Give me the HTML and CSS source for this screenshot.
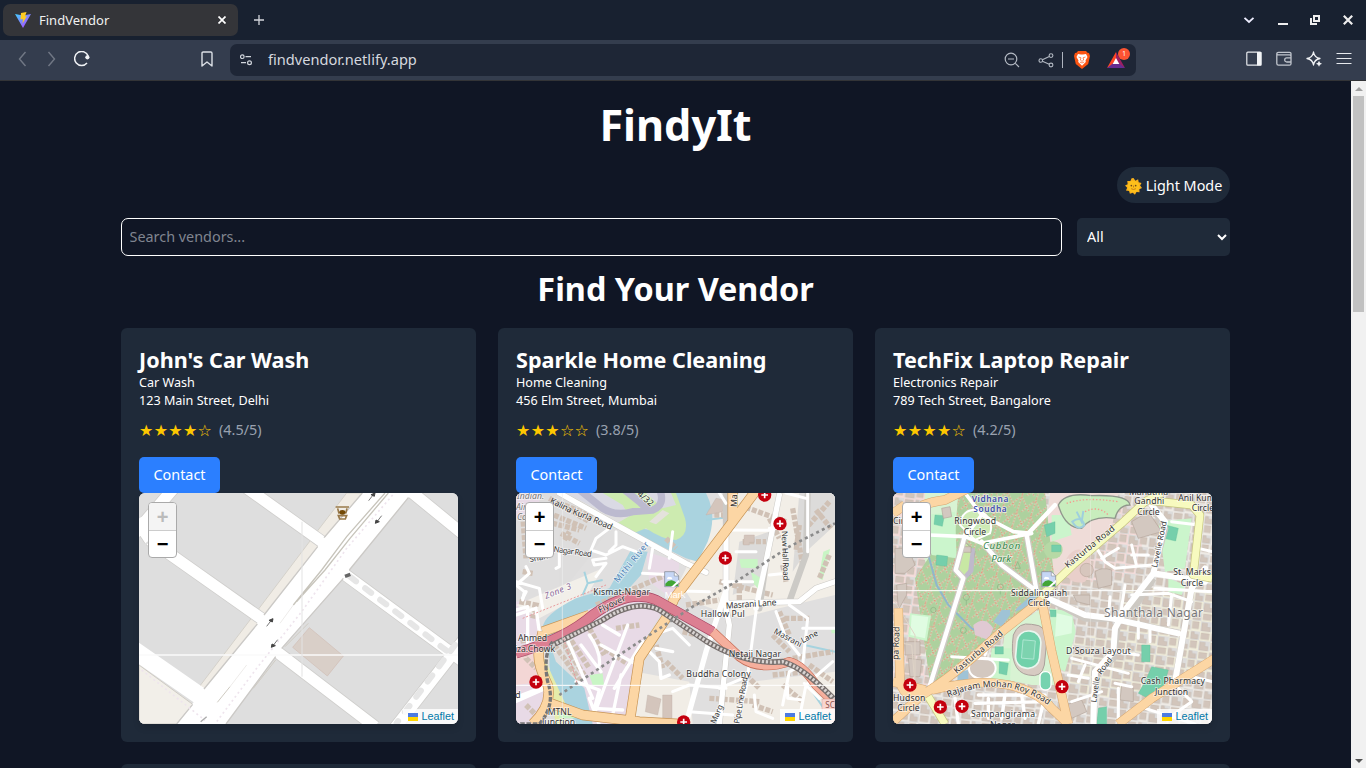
FILE: index.html
```html
<!DOCTYPE html>
<html lang="en">
<head>
<meta charset="utf-8">
<title>FindVendor</title>
<link rel="stylesheet" href="styles.css">
</head>
<body>
<svg width="0" height="0" class="defs" aria-hidden="true">
  <defs>
    <g id="hospital"><circle r="20" fill="#c4000e"/><path d="M-10 0H10M0-10V10" stroke="#fff" stroke-width="5"/></g>
    <g id="broken"><path d="M1 1H30L43 14V46H1Z" fill="#c6d6f5" stroke="#8d929c" stroke-width="2.5"/><path d="M30 1V14H43Z" fill="#fff" stroke="#8d929c" stroke-width="2"/><path d="M8 22q2-8 8-5q8-1 8 7H8z" fill="#fff"/><path d="M3 44V37Q12 26 22 27T41 40V44Z" fill="#42a536"/><path d="M20 47L44 25V33L29 47Z" fill="#fff"/></g>
    <g id="arrow"><path d="M0 0L-17 22" stroke="#777" stroke-width="3"/><path d="M2-1L0 9L-10 4Z" fill="#444" stroke="#444" stroke-width="3"/></g>
    <linearGradient id="vite" x1="0" y1="0" x2="1" y2="1"><stop stop-color="#41d1ff"/><stop offset="1" stop-color="#bd34fe"/></linearGradient>
    <pattern id="blocks" width="62" height="58" patternUnits="userSpaceOnUse" patternTransform="rotate(7)"><path d="M0 0H34V30H0ZM34 32H62V58H34Z" fill="#dddcdb"/><path d="M3 4h16v12h10v12H3zM37 3h19v21H37zM4 35h24v18H4zM36 34h9v7h12v14H36z" fill="#d2c5bb" stroke="#bfafa3"/></pattern>
    <pattern id="dots" width="44" height="50" patternUnits="userSpaceOnUse" patternTransform="rotate(18)"><path d="M5 0V50M5 6L40 44M44 10L18 50" stroke="#cfe0bf" stroke-width="5" fill="none"/><path d="M5 0V50M5 6L40 44M44 10L18 50" stroke="#fa8072" stroke-width="3.5" stroke-dasharray="4 5" fill="none"/></pattern>
    <path id="rajaram" d="M190 637Q285 596 370 608Q440 622 500 668"/>
    <path id="kalina" d="M130 53L200 88Q260 110 320 138"/>
  </defs>
</svg>

<header class="browser">
  <div class="tabs">
    <div class="tab">
      <svg class="favicon" viewBox="0 0 16 16"><path d="M0 2L8 16L16 2L8 3.5Z" fill="url(#vite)"/><path d="M6 1L11.5 0L10 4.5L12 4L7.5 11.5L8 7L5.5 7.5Z" fill="#ffcb20"/></svg>
      <span class="tab-title">FindVendor</span>
      <svg width="8" height="8" viewBox="0 0 8 8"><path d="M.5.5L7.5 7.5M7.5.5L.5 7.5" stroke="#fff" stroke-width="1.7"/></svg>
    </div>
    <svg class="new-tab" width="10" height="10" viewBox="0 0 10 10"><path d="M5 0V10M0 5H10" stroke="#d3d6dc" stroke-width="1.3"/></svg>
    <div class="window-controls">
      <svg width="12" height="12" viewBox="0 0 12 12"><path d="M1.5 3.8L6 8L10.5 3.8" fill="none" stroke="#eef" stroke-width="1.8"/></svg>
      <svg width="12" height="12" viewBox="0 0 12 12"><path d="M1 10H11" stroke="#eee" stroke-width="2"/></svg>
      <svg width="12" height="12" viewBox="0 0 12 12"><path d="M5 2H10V7H5ZM2 4V10H8" fill="none" stroke="#eee" stroke-width="2"/></svg>
      <svg width="12" height="12" viewBox="0 0 12 12"><path d="M1.8 1.8L10.2 10.2M10.2 1.8L1.8 10.2" stroke="#eee" stroke-width="2.2"/></svg>
    </div>
  </div>
  <div class="toolbar">
    <div class="nav-icons">
      <svg viewBox="0 0 16 16"><path d="M11.5 1L5.5 8L11.5 15" fill="none" stroke="#717885" stroke-width="1.4"/></svg>
      <svg viewBox="0 0 16 16"><path d="M4.5 1L10.5 8L4.5 15" fill="none" stroke="#717885" stroke-width="1.4"/></svg>
      <svg viewBox="0 0 16 16"><path d="M13 12A7 7 0 1 1 14.2 5" fill="none" stroke="#f1f3f6" stroke-width="1.5"/><circle cx="13.4" cy="6.3" r="2.1" fill="#f1f3f6"/></svg>
    </div>
    <svg class="bookmark" viewBox="0 0 12 16"><path d="M1 2.2Q1 1 2.2 1H9.8Q11 1 11 2.2V15L6 11L1 15Z" fill="none" stroke="#dce0e6" stroke-width="1.4" stroke-linejoin="round"/></svg>
    <div class="address">
      <svg class="site-info" viewBox="0 0 12 12"><g fill="none" stroke="#d2d6dd" stroke-width="1.2"><circle cx="2.3" cy="2.7" r="1.8"/><path d="M5.5 2.7H11M1 8.7H6"/><circle cx="9.5" cy="8.7" r="1.9"/></g></svg>
      <span class="url">findvendor.netlify.app</span>
      <svg class="i-zoom" viewBox="0 0 16 16"><g fill="none" stroke="#b3b9c3" stroke-width="1.2"><circle cx="7" cy="7" r="5.8"/><path d="M11.3 11.3L15 15M4 7H10"/></g></svg>
      <svg class="i-share" viewBox="0 0 16 16"><g fill="none" stroke="#b3b9c3" stroke-width="1.1"><circle cx="2.8" cy="8.5" r="1.8"/><circle cx="13" cy="3.6" r="1.9"/><circle cx="13" cy="13" r="1.9"/><path d="M4.4 7.7L11.3 4.5M4.4 9.3L11.3 12.2"/></g></svg>
      <i class="rule"></i>
      <svg class="i-brave" viewBox="0 0 16 18"><path d="M4 0H12L13.5 1.8L15 2L16 5L14.2 13L8 18L1.8 13L0 5L1 2L2.5 1.8Z" fill="#fb5412"/><path d="M4 3L7 3.4H9L12 3L13.5 6L11.5 9.5L11.8 11L8 14.7L4.2 11L4.5 9.5L2.5 6Z" fill="#fff"/><path d="M4.5 6L7 6.8L6.3 9L8 10.4L9.7 9L9 6.8L11.5 6M5.8 11L8 12L10.2 11" stroke="#fb5412" stroke-width=".7" fill="none"/></svg>
      <span class="rewards">
        <svg viewBox="0 0 18 16"><path d="M9 0L0 16L9 11Z" fill="#ff4724"/><path d="M9 0L18 16L9 11Z" fill="#9e1f63"/><path d="M0 16H18L9 9Z" fill="#662d91"/><path d="M9 6L12.3 12H5.7Z" fill="#fff"/></svg>
        <b class="badge">1</b>
      </span>
    </div>
    <div class="tool-icons">
      <svg viewBox="0 0 16 16"><rect x=".8" y="1.2" width="14.2" height="13" rx="1" fill="none" stroke="#e6e9ed" stroke-width="1.2"/><path d="M11 1H15.4V14.5H11Z" fill="#f2f4f6"/></svg>
      <svg viewBox="0 0 16 16"><g fill="none" stroke="#c0c5cd" stroke-width="1.3"><path d="M15 5V2.8Q15 1.3 13.5 1.3H2.5Q.8 1.3.8 3V12.5Q.8 14.2 2.5 14.2H13.5Q15 14.2 15 12.7V4.5Q14.5 3.8 13.5 3.8H2Q.8 3.8.8 3"/><path d="M15 6.8H10.8A2.1 2.1 0 0 0 10.8 11H15"/></g></svg>
      <svg viewBox="0 0 16 16"><path d="M7.5 1Q8.3 6.5 14 7.5Q8.3 8.5 7.5 14Q6.7 8.5 1 7.5Q6.7 6.5 7.5 1Z" fill="none" stroke="#f1f3f6" stroke-width="1.3" stroke-linejoin="round"/><path d="M13 9.8L14 11.8L16 12.8L14 13.8L13 15.8L12 13.8L10 12.8L12 11.8Z" fill="#f1f3f6"/></svg>
      <svg viewBox="0 0 16 16"><path d="M.5 2.5H15.5M.5 7.5H15.5M.5 12.5H15.5" stroke="#e6e9ed" stroke-width="1"/></svg>
    </div>
  </div>
</header>

<div class="viewport">
  <main class="page">
    <h1>FindyIt</h1>
    <div class="theme-row">
      <button class="theme"><svg viewBox="0 0 18 18"><path d="M9 0L11 2.8L13.9 1.4L14.5 4.5L17.5 5.4L16 8L18 10.5L15.2 11.8L15.4 15L12.2 14.7L10.5 17.8L8.2 15.6L5.2 16.8L4.3 13.8L1 13.2L2.3 10.3L0 8L2.8 6.5L2.4 3.2L5.7 3.3L7 .3Z" fill="#f9b11b"/><circle cx="9" cy="9" r="6.2" fill="#fec01b"/><circle cx="6.7" cy="8" r=".9" fill="#704a1b"/><circle cx="11.3" cy="8" r=".9" fill="#704a1b"/><path d="M9 8V10M6.5 11.3Q9 13 11.5 11.3" fill="none" stroke="#b8701a" stroke-width=".9"/></svg>Light Mode</button>
    </div>
    <div class="filters">
      <input type="text" placeholder="Search vendors...">
      <select><option>All</option></select>
    </div>
    <h2>Find Your Vendor</h2>

    <section class="grid">
      <article class="card">
        <h3>John's Car Wash</h3>
        <p>Car Wash</p>
        <p>123 Main Street, Delhi</p>
        <div class="rating"><span class="stars">★★★★☆</span><span>(4.5/5)</span></div>
        <button class="contact">Contact</button>
        <div class="map">
          <svg class="tiles" viewBox="27 24 957 693">
            <rect x="27" y="24" width="957" height="693" fill="#dedede"/>
            <path d="M27 540L188 658L140 717H27Z" fill="#f2efe9" stroke="#cfcbc4" stroke-width="3"/>
            <path d="M650 24L563 137L540 168L385 373L360 405L208 605L230 620L420 390L590 160L710 24Z" fill="#f0ece5" stroke="#d4d1ca" stroke-width="3"/>
            <path d="M345 5L580 173M60 165L400 405M5 492L230 650M430 492L735 725M640 265L1000 530M1000 466L790 735M825 5L1000 148M15 145L135 5M20 105L60 165" fill="none" stroke="#d0cfcd" stroke-width="39"/>
            <g fill="none" stroke="#fff">
              <path d="M345 5L580 173M60 165L400 405M430 492L735 725M640 265L1000 530M1000 466L790 735M825 5L1000 148M15 145L135 5M20 105L60 165" stroke-width="34"/>
              <path d="M5 490L235 650" stroke-width="53"/>
            </g>
            <path d="M697 24L563 185L402 390L222 612L140 717H288L437 515L455 490L640 280L658 255L835 38L850 24Z" fill="#fff"/>
            <path d="M697 24L582 158M563 185L402 390M382 417L222 612M188 658L140 717M288 717L437 515M455 490L640 280M658 255L835 38" fill="none" stroke="#cbc9c6" stroke-width="4"/>
            <path d="M765 24L650 155L575 255L490 360M775 24L660 160L585 255L500 350" fill="none" stroke="#c7c4bb" stroke-width="4"/>
            <path d="M490 360L450 415M350 540L300 605" fill="none" stroke="#eeecea" stroke-width="3"/>
            <path d="M300 605L262 652M465 485L535 415M437 525L370 610" fill="none" stroke="#cfcbc2" stroke-width="3"/>
            <path d="M788 30L650 190L515 380L380 550L255 717M35 555L225 706" fill="none" stroke="#eee4ed" stroke-width="5" stroke-dasharray="6 9"/>
            <path d="M660 275L960 505M975 480L800 714" fill="none" stroke="#e6e6e6" stroke-width="18" stroke-dasharray="23 34" stroke-linecap="round"/>
            <path d="M538 428L640 513L592 573L488 487Z" fill="#d9cfc8" stroke="#d0bdb3" stroke-width="2"/>
            <path d="M27 510H984" stroke="#fafafa" stroke-width="5"/><path d="M516 110V575" stroke="#e3e3e3" stroke-width="3"/>
            <use href="#arrow" x="733" y="25"/><use href="#arrow" x="427" y="402"/>
            <use href="#arrow" transform="translate(738 114) rotate(180)"/><use href="#arrow" transform="translate(426 486) rotate(180)"/>
            <path d="M212 710L230 695" stroke="#aaa" stroke-width="4"/><path d="M645 274L661 268" stroke="#666" stroke-width="10"/>
            <path d="M617 66H657M623 70L627 86M651 70L647 86M625 92H650L646 102H629Z" fill="none" stroke="#98794a" stroke-width="5"/><ellipse cx="637" cy="82" rx="9" ry="7" fill="#734a08"/>
          </svg>
          <div class="zoom"><span class="off">+</span><span>−</span></div>
          <div class="credit"><i></i>Leaflet</div>
        </div>
      </article>

      <article class="card">
        <h3>Sparkle Home Cleaning</h3>
        <p>Home Cleaning</p>
        <p>456 Elm Street, Mumbai</p>
        <div class="rating"><span class="stars">★★★☆☆</span><span>(3.8/5)</span></div>
        <button class="contact">Contact</button>
        <div class="map">
          <svg class="tiles" viewBox="30 24 957 693">
            <rect x="30" y="24" width="957" height="693" fill="#e0dfdf"/>
            <path d="M30 24H180L310 130L240 230L160 330L30 290Z" fill="#dedddd"/>
            <path d="M610 110L700 24H987V330L820 370L700 400L560 350L520 290Z" fill="#f2eee7"/>
            <path d="M880 24H987V120L900 200L860 260ZM700 170L790 140L770 290L680 330Z" fill="#dcdbda"/>
            <path d="M200 460L250 370L440 340L470 380L400 490L370 717H240Z" fill="#e8dae6"/>
            <path d="M30 25H100V420L120 717H30ZM420 200L520 230L510 350L430 290Z" fill="#e8dae6"/>
            <path d="M30 100H160V330L30 350Z" fill="#dfdede"/>
            <path d="M390 560L550 590L560 717H380ZM660 600L987 560V717H640Z" fill="#f1ede6"/>
            <path d="M30 500L100 510L110 590L30 600Z" fill="#f3d6d5"/>
            <path d="M30 360L290 250L250 320L100 400Z" fill="#f2efe9"/>
            <path d="M490 24H600Q635 90 605 170L575 230L540 220L385 145L400 130L530 150Z" fill="#aad3df"/>
            <path d="M180 24H500L520 75Q490 110 400 100L290 80Z" fill="#dadae4"/>
            <path d="M290 24H420L470 70L510 60L495 24H510L537 100Q550 150 510 165Q470 165 420 130L390 142L315 125L370 94L350 60Z" fill="#cdebb0"/>
            <path d="M430 110L470 75L490 85L450 118Z" fill="#e4e2dc"/>
            <path d="M215 10L290 70Q330 95 380 80L440 75Q480 60 460 10M350 10L400 50L430 78" fill="none" stroke="#bcbacf" stroke-width="22" stroke-linejoin="round"/>
            <path d="M375 195L425 200L405 270L360 320L300 350L210 390L160 440L130 470L150 530L235 610L260 717H210L170 650Q130 610 130 520L110 430Q110 390 210 340L310 310Z" fill="#aad3df"/>
            <path d="M235 260L245 295L230 330M245 295L290 285M600 105L700 92M895 480L987 500M905 600L960 680" fill="none" stroke="#a6d3df" stroke-width="6"/>
            <path d="M110 510L180 660L175 717H150Z" fill="#e5ecaa"/>
            <path d="M250 570L290 565L294 600L260 600ZM700 222H755V250L705 248ZM735 260L765 280L760 315L742 295ZM952 200L972 192L950 285L938 280ZM160 650L210 700H160ZM975 430L987 425V445L977 445Z" fill="#c9f5c5"/>
            <g fill="none" stroke="#d0c1b5" stroke-width="16" stroke-dasharray="15 5">
              <path d="M70 60L240 130M50 90L60 220M80 100L220 135M165 145L220 175M175 165L190 140M40 350L90 360L80 400M50 260L80 265M130 40L250 110M175 60L260 95"/>
              <path d="M185 450L250 550M160 460L235 570M145 480L225 590M250 430L295 510M280 480L370 540M330 430L400 420M270 360L480 270"/>
              <path d="M700 60L840 110M710 170H780M860 70L890 240M970 50L900 130M930 75L975 130M970 210L940 280M880 120L870 200M790 100L820 160M660 90H625"/>
              <path d="M640 290L800 330M700 290V350M540 360L640 345M830 240L840 290M480 160L510 190"/>
              <path d="M820 380L850 450M835 400H910M800 450L850 500M860 520L980 500M910 540L980 590M800 570L900 560M830 600L890 650M720 570L760 610M610 640L760 650M530 440L570 450M480 530L530 580M450 480L470 550M50 460L60 520L90 550M60 660L100 700M740 660L800 680"/>
            </g>
            <path d="M425 630L465 642L455 690L418 680ZM600 90L650 80L660 45L630 40ZM715 150H745V172H730V180H712ZM470 630H498V700H470Z" fill="#d4c5bc" stroke="#bdaea3"/>
            <path d="M160 24L340 125L540 235L600 262M820 30L780 230L760 370M905 30L900 210L850 350M660 24V370L670 420L640 717M987 290L930 310L880 350L650 355" fill="none" stroke="#cccac6" stroke-width="19" stroke-linecap="round" stroke-linejoin="round"/>
            <g fill="none" stroke="#fff" stroke-linecap="round" stroke-linejoin="round">
              <path d="M160 24L340 125L540 235L600 262M820 30L780 230L750 370M660 140V370L670 420L640 717M987 290L930 310L880 350L650 355M662 310L600 500L540 717M30 640L110 610" stroke-width="16"/>
              <path d="M310 130L270 160L255 195L300 210L350 185L390 200M330 140V180L310 200M300 220L260 225L265 240L300 235L270 275M60 245L70 265L30 300L55 320L50 345M160 200V245L150 250M30 290L100 310L110 370M440 190L430 250M410 265L510 270M500 140L490 220M905 24V200M900 40L840 24M820 130H790M660 135L795 136M790 270L840 265M690 200H750M650 290H740M530 318L610 320M640 24L660 55" stroke-width="9"/>
              <path d="M180 455L260 640M225 480L285 560M250 450Q285 500 280 540M290 420L340 450M285 480L395 540M365 420L260 700M410 470L325 610M250 640L280 720M210 590L280 615L265 670L350 675M345 570L320 690M430 500L460 530L465 580L490 570M450 490L500 500M30 390L90 370L100 440M30 375L65 365V480M60 320L50 340" stroke-width="10"/>
              <path d="M850 360L905 400L890 540L850 560L830 660M890 430L987 430M980 530L900 600L880 700M810 380L840 460L880 510M750 380L720 610L690 717M745 630L750 680L800 700M550 680L680 690M30 650L120 610M500 620L550 600L660 610M845 600V640L890 645M895 595L940 640M710 580L640 610M440 450L500 430L550 480" stroke-width="9"/>
            </g>
            <g fill="none" stroke-linejoin="round">
              <path d="M755 10L665 130L505 340L480 400L400 520L370 717M680 24V110L650 150M110 440L100 490Q90 530 125 600Q140 660 80 717M250 390L110 440M120 650L230 690L400 710L520 717" stroke="#c79455" stroke-width="31"/>
              <path d="M755 10L665 130L505 340L480 400L400 520L370 717M680 24V110L650 150M110 440L100 490Q90 530 125 600Q140 660 80 717M250 390L110 440M120 650L230 690L400 710L520 717" stroke="#fcd6a4" stroke-width="27"/>
              <path d="M30 505Q180 460 260 390Q370 310 450 345L620 440" stroke="#a84765" stroke-width="31"/>
              <path d="M30 505Q180 460 260 390Q370 310 450 345L620 440" stroke="#dc7f92" stroke-width="27"/>
              <path d="M620 440L700 515Q760 560 850 530Q890 540 930 600L987 655" stroke="#c36b55" stroke-width="28"/>
              <path d="M620 440L700 515Q760 560 850 530Q890 540 930 600L987 655" stroke="#f5af9d" stroke-width="24"/>
              <path d="M140 480L290 405Q390 340 460 375L600 468Q720 540 830 530Q890 545 987 645" stroke="#77706e" stroke-width="17"/>
              <path d="M140 480L290 405Q390 340 460 375L600 468Q720 540 830 530Q890 545 987 645" stroke="#d8d3d1" stroke-width="10" stroke-dasharray="7 5"/>
              <path d="M140 470Q110 510 125 590Q150 660 100 717L40 717" stroke="#777" stroke-width="10" stroke-dasharray="14 5"/>
              <path d="M160 630L370 490L560 365L690 290L850 185L987 115" stroke="#8b8b8b" stroke-width="8" stroke-dasharray="9 10"/>
              <path d="M170 450L215 600M50 400L300 300" stroke="#e89a9d" stroke-width="3" stroke-dasharray="6 5"/>
            </g>
            <path d="M30 601H987" stroke="#fff" stroke-width="3"/><path d="M169 24V717" stroke="#eee" stroke-width="2"/>
            <use href="#hospital" x="776" y="30"/><use href="#hospital" x="822" y="116"/><use href="#hospital" x="658" y="219"/><use href="#hospital" x="90" y="591"/><use href="#hospital" x="533" y="711"/>
            <g class="label">
              <g class="grey"><text x="33" y="43">Indian.</text><text x="30" y="75">Air</text><text x="33" y="105">Co</text></g>
              <text textLength="202"><textPath href="#kalina">Kalina Kurla Road</textPath></text>
              <text transform="translate(72 232) rotate(-12)" class="small">Shan</text><text transform="translate(142 200) rotate(8)" class="small" textLength="115">Nagar Road</text>
              <text transform="translate(120 342) rotate(-22)" class="zone" textLength="84">Zone 3</text>
              <text transform="translate(336 295) rotate(-51)" class="water" textLength="150">Mithi River</text>
              <text transform="translate(392 30) rotate(40)">4/32</text>
              <text x="262" y="329" textLength="170">Kismat-Nagar</text>
              <text transform="translate(282 384) rotate(-26)">Flyover</text>
              <text transform="translate(692 66) rotate(-88)">Ma</text>
              <text transform="translate(827 138) rotate(88)" class="small" textLength="148">New Hall Road</text>
              <text transform="translate(660 371) rotate(-4)" textLength="152">Masrani Lane</text>
              <text transform="translate(802 444) rotate(28)" class="small">Masrani</text><text transform="translate(890 475) rotate(-28)" class="small">Lane</text>
              <text x="584" y="396" textLength="132">Hallow Pul</text><text x="668" y="515" textLength="157">Netaji Nagar</text><text x="541" y="575" textLength="193">Buddha Colony</text>
              <text x="36" y="468">Ahmed</text><text x="26" y="500">iza.Chowk</text>
              <text x="125" y="690">MTNL</text><text x="108" y="721">Junction</text><text x="28" y="640">d</text>
              <text transform="translate(700 717) rotate(-80)" class="small" textLength="142">Pipe Line Road</text><text transform="translate(628 718) rotate(-67)" class="small">Marg</text>
            </g>
            <path d="M948 642H987V710H948Z" fill="#f8d5cf" stroke="#c58a80"/><text x="958" y="670" class="shield">SC</text>
            <use href="#broken" x="475" y="259"/><text x="476" y="338" class="alt">Mark</text>
          </svg>
          <div class="zoom"><span>+</span><span>−</span></div>
          <div class="credit"><i></i>Leaflet</div>
        </div>
      </article>

      <article class="card">
        <h3>TechFix Laptop Repair</h3>
        <p>Electronics Repair</p>
        <p>789 Tech Street, Bangalore</p>
        <div class="rating"><span class="stars">★★★★☆</span><span>(4.2/5)</span></div>
        <button class="contact">Contact</button>
        <div class="map">
          <svg class="tiles" viewBox="24 24 957 693">
            <rect x="24" y="24" width="957" height="693" fill="#eeeae5"/>
            <path d="M500 60L700 24L780 100L760 270L500 310ZM24 24H150L130 200L100 470L130 600L24 610Z" fill="#f5dcda"/>
            <path d="M720 310H981V560L760 650L560 620L540 480L700 430Z" fill="#f0eddb"/>
            <path d="M24 24H981V717H24Z" fill="url(#blocks)"/>
            <path d="M120 24H230L200 200L140 280L110 200ZM360 440L470 370L510 600L440 600L340 580Z" fill="#d8f3d3"/>
            <path d="M495 24H640L700 24L680 130L560 240L510 290L480 180Z" fill="#efdcd8"/>
            <path d="M220 24H480L510 300L400 400L330 440L190 590H135L90 280L150 190L210 150Z" fill="#add19e"/>
            <path d="M220 24H480L510 300L400 400L330 440L190 590H135L90 280L150 190L210 150Z" fill="url(#dots)" opacity=".8"/>
            <path d="M120 90L210 80L215 220L140 210ZM75 385L138 392L125 468L70 455ZM495 370L560 380L572 440L540 560L500 540ZM500 90H550L560 150L500 170ZM820 110L920 100L900 250L840 260ZM850 280L900 300L890 330L850 320ZM320 490H380L375 590L310 600Z" fill="#cbf5cc"/>
            <path d="M80 390L130 396L120 460L76 450ZM515 385L562 395L560 445L510 455Z" fill="#e0fce2"/>
            <path d="M520 60Q540 20 620 32Q730 28 735 60Q700 60 690 100Q620 90 590 130Q540 130 520 60Z" fill="#c8edbd" stroke="#8f978c" stroke-width="4"/>
            <path d="M545 55Q600 35 700 50M600 80Q640 60 670 90" fill="none" stroke="#f59a90" stroke-width="4" stroke-dasharray="4 6"/>
            <path d="M562 110Q590 90 598 120Q580 140 562 110ZM575 80L590 110L595 78" fill="none" stroke="#9fcfdd" stroke-width="6"/>
            <ellipse cx="505" cy="195" rx="28" ry="26" fill="#b6d9a5"/>
            <path d="M225 120Q230 70 280 75Q330 100 315 145L270 165Z" fill="#cdeab5" stroke="#fff" stroke-width="6"/>
            <path d="M240 170L270 200L255 270L225 285L215 250Z" fill="#c8e8a4" stroke="#a99e9c" stroke-width="3"/><path d="M270 190L265 260L235 290L230 278L250 255L258 190Z" fill="#bfb9cb"/>
            <path d="M130 210L155 300L190 360L260 430L300 450" fill="none" stroke="#8fb7cc" stroke-width="6"/>
            <path d="M325 410L350 375L375 375V390L350 425ZM395 370L440 330L455 335L430 365L390 380ZM220 560L250 555V600H215Z" fill="#9fc3d6"/>
            <path d="M265 420Q300 390 325 430L310 465L270 450Z" fill="#e0c9d3"/>
            <g fill="#75cfab" stroke="#5fbb98"><path d="M150 90L178 92L172 124L147 118ZM155 210L188 214L185 244L153 240ZM478 120L510 110V145L485 155ZM330 485H355V507H330ZM343 530L370 535L365 570L342 565ZM495 375H513V395H497ZM842 120L880 130L872 168L836 160ZM770 480H795V530H770ZM800 545L850 555L835 610L790 640L760 625L780 590ZM640 670L665 665V717H635ZM500 180H528V200H500ZM30 395H47V415H30Z"/></g>
            <path d="M545 220Q570 180 600 200Q640 240 600 290Q560 300 545 270Z" fill="#e9cfca"/>
            <circle cx="605" cy="255" r="20" fill="#d7c6bd" stroke="#b9a79d" stroke-width="2"/>
            <g fill="#d3c8c0" stroke="#b5a69c" stroke-width="2"><path d="M565 330H615V360L575 350ZM630 260Q650 245 680 255V300L640 310ZM170 70L195 65L200 95L175 100ZM30 190H70L90 240L60 265H30ZM35 300L65 295V330L40 375ZM60 470H105V510H60ZM70 520L110 525L105 575H75ZM230 185H258V202H230ZM540 660L590 645L605 680L560 700ZM710 600L745 610V650L705 645ZM740 110L790 80L830 140L760 160Z"/></g>
            <ellipse cx="292" cy="550" rx="40" ry="32" fill="#d3c8c0" stroke="#fff" stroke-width="6"/>
            <path d="M385 450Q400 410 440 418Q490 420 485 470L478 540Q470 580 430 570Q370 560 385 450Z" fill="#d7cbc2" stroke="#aaa19b" stroke-width="3"/>
            <rect x="394" y="438" width="72" height="112" rx="34" fill="#71d1aa" stroke="#e9f7ef" stroke-width="5" transform="rotate(5 430 490)"/><rect x="412" y="466" width="37" height="55" fill="#7dd3af" stroke="#c4efe0" stroke-width="2" transform="rotate(5 430 490)"/>
            <rect x="465" y="560" width="33" height="55" rx="15" fill="#75d3af" stroke="#fff" stroke-width="4"/>
            <path d="M140 590L235 280L212 255L240 150M300 180L350 240L450 315L495 345L600 400L680 400L880 445M425 150L455 320M800 60L840 130L805 260M960 280L920 310L870 590M805 280L740 380L700 400L685 520L630 560L625 717" fill="none" stroke="#cdc9c3" stroke-width="20" stroke-linejoin="round"/>
            <g fill="none" stroke="#fff" stroke-linecap="round" stroke-linejoin="round">
              <path d="M500 345L600 390L680 400L880 445M800 60L840 110L820 200L805 265L720 375L690 430L685 500L630 560L625 717M805 265L960 290M960 250L920 310L870 590" stroke-width="18"/>
              <path d="M135 600L235 280L212 255L240 150M290 170L350 240L450 315L500 345M425 150L455 320M425 150L510 60" stroke-width="13"/>
              <path d="M135 150L240 155L290 175L440 145L385 140L290 90L240 155M290 90L240 24" stroke-width="11"/>
              <path d="M635 190L660 230L690 250L800 240M650 220L700 190M740 180L755 245M740 210H790M720 300L705 400M675 335L670 400M810 310L980 320M740 330L850 325L920 350M860 330L850 420M760 410V460M795 430V470M690 500L760 510M560 520L730 565M600 540L580 590M550 570L610 580M690 595L740 605M700 610V700M650 620L560 650M870 600L920 650L850 700M780 670L930 717M860 110L940 120M940 190L981 200M900 570L981 590M200 515L370 525M300 510L310 480" stroke-width="9"/>
              <path d="M280 630H480L460 717M310 640V700M360 630L350 700M410 630L420 700M270 655L490 650M260 690H450M210 640L220 717" stroke-width="10"/>
            </g>
            <path d="M24 717L90 600L80 480L24 470M90 600V450L24 340" fill="none" stroke="#dfd4c7" stroke-width="3"/>
            <g fill="none" stroke-linejoin="round">
              <path d="M110 62Q140 50 180 45L250 10M40 370L45 590Q60 650 120 625Q190 580 260 520L350 440L470 345L500 500L550 717M24 710L110 630M140 615Q280 580 370 600T500 670L550 717M24 85L60 60M700 717L800 640L990 520M24 590L120 615" stroke="#d6a771" stroke-width="28"/>
              <path d="M110 62Q140 50 180 45L250 10M40 370L45 590Q60 650 120 625Q190 580 260 520L350 440L470 345L500 500L550 717M24 710L110 630M140 615Q280 580 370 600T500 670L550 717M24 85L60 60M700 717L800 640L990 520M24 590L120 615" stroke="#fcd6a4" stroke-width="25"/>
              <path d="M465 335L570 235L710 115L780 50L830 24M780 45L920 60L945 90L925 270L981 280M130 635L180 717" stroke="#c5c57e" stroke-width="25"/>
              <path d="M465 335L570 235L710 115L780 50L830 24M780 45L920 60L945 90L925 270L981 280M130 635L180 717" stroke="#f7fabf" stroke-width="21"/>
            </g>
            <g fill="none" stroke="#8ab284" stroke-width="2"><circle cx="244" cy="337" r="9"/><path d="M244 346V360"/><circle cx="346" cy="306" r="9"/><path d="M346 315V328"/><circle cx="235" cy="436" r="9"/><circle cx="145" cy="375" r="8"/><path d="M390 250L398 230L406 250Z"/></g>
            <path d="M24 317H981" stroke="#fff" stroke-width="3"/><path d="M616 24V717" stroke="#f5f2ed" stroke-width="2" opacity=".6"/>
            <use href="#hospital" x="75" y="600"/><use href="#hospital" x="166" y="666"/><use href="#hospital" x="231" y="664"/><use href="#hospital" x="531" y="605"/>
            <g class="label">
              <g class="gov"><text x="260" y="50" textLength="110">Vidhana</text><text x="265" y="81" textLength="100">Soudha</text></g>
              <text x="208" y="116" textLength="125">Ringwood</text><text x="236" y="149">Circle</text><text x="24" y="116">Cir</text>
              <g class="park"><text x="294" y="192" textLength="112">Cubbon</text><text x="319" y="231">Park</text></g>
              <text x="748" y="57" textLength="90">Gandhi</text><text x="757" y="89">Circle</text><text x="732" y="29">Mahatma</text>
              <text x="880" y="47">Anil Kumb</text><text x="920" y="78">Circle</text>
              <text x="865" y="271" textLength="113">St. Marks</text><text x="887" y="303">Circle</text>
              <text x="378" y="333" textLength="168">Siddalingaiah</text><text x="428" y="363">Circle</text>
              <text x="657" y="397" class="district" textLength="297">Shanthala Nagar</text>
              <text x="543" y="507" textLength="194">D'Souza Layout</text>
              <text x="767" y="597" textLength="193">Cash Pharmacy</text><text x="810" y="629">Junction</text>
              <text x="24" y="648" textLength="97">Hudson</text><text x="37" y="677">Circle</text><text x="258" y="697" textLength="192">Sampangirama</text><text x="315" y="728">Nagar</text>
              <text transform="translate(548 250) rotate(-39)" textLength="184">Kasturba Road</text><text transform="translate(215 567) rotate(-40)" textLength="184">Kasturba Road</text>
              <text textLength="316"><textPath href="#rajaram">Rajaram Mohan Roy Road</textPath></text>
              <text transform="translate(816 249) rotate(-78)" class="small">Lavelle Road</text><text transform="translate(634 653) rotate(-83)" class="small">Lavelle</text><text transform="translate(648 570) rotate(-52)" class="small">Road</text>
              <text transform="translate(40 525) rotate(-88)">pa Road</text>
            </g>
            <use href="#broken" x="469" y="259"/>
          </svg>
          <div class="zoom"><span>+</span><span>−</span></div>
          <div class="credit"><i></i>Leaflet</div>
        </div>
      </article>
      <article class="card"></article><article class="card"></article><article class="card"></article>
    </section>
  </main>
  <div class="scrollbar"><i class="up"></i><i class="thumb"></i><i class="down"></i></div>
</div>
</body>
</html>
```
FILE: styles.css
```css
* { box-sizing: border-box; }
body { margin: 0; height: 768px; overflow: hidden; display: flex; flex-direction: column; background: #101625; color: #fff; font: 14.4px/21.6px "Noto Sans", sans-serif; }
.defs { position: absolute; }
svg { display: block; flex: none; }
h1, h2, h3, p { margin: 0; }
button, input, select { font: inherit; color: inherit; border: 0; }

.browser { flex: none; height: 81px; border-bottom: 1px solid #333437; }
.tabs { height: 40px; padding: 4px 12px 4px 3px; display: flex; align-items: center; background: #182130; }
.tab { width: 235px; height: 32px; border-radius: 7px; padding: 0 12px; display: flex; align-items: center; background: #343539; font-size: 13px; }
.favicon { width: 16px; height: 16px; margin-right: 8px; }
.tab-title { flex: 1; padding-top: 1px; color: #f1f1f1; }
.new-tab { margin-left: 16px; }
.window-controls { margin-left: auto; display: flex; gap: 20px; }
.window-controls svg:nth-child(1) { margin-right: 2px; }
.window-controls svg:nth-child(3) { margin-right: 1px; }
.toolbar { height: 40px; background: #343d4e; display: flex; align-items: center; padding: 0 14px; }
.nav-icons { display: flex; gap: 14px; width: 188px; margin-top: -2px; }
.nav-icons svg, .tool-icons svg { width: 16px; height: 16px; }
.bookmark { width: 12px; height: 16px; margin: -2px 16px 0 -1px; }
.address { width: 906px; height: 32px; border-radius: 7px; background: #1e2636; display: flex; align-items: center; padding-left: 10px; margin-left: 1px; }
.site-info { width: 12px; height: 12px; }
.url { margin: 0 auto 0 16px; font-size: 14.6px; color: #d5d8df; }
.i-zoom { width: 16px; height: 16px; margin-right: 18px; }
.i-share { width: 16px; height: 16px; margin-right: 8px; }
.rule { width: 1px; height: 16px; background: #aeb4bf; }
.i-brave { width: 16px; height: 18px; margin: 0 17px 0 11px; }
.rewards { position: relative; margin-right: 11px; }
.rewards svg { width: 18px; height: 16px; }
.badge { position: absolute; left: 11px; top: -4px; width: 12px; height: 12px; border-radius: 6px; background: #fc5432; font: 6.5px/12px "Noto Sans", sans-serif; text-align: center; }
.tool-icons { display: flex; gap: 14px; margin: -2px 0 0 auto; }

.viewport { flex: 1; min-height: 0; display: flex; justify-content: space-between; }
.page { width: 1109px; margin-left: 121px; padding-top: 22px; overflow: hidden; }
h1 { font-size: 43.2px; line-height: 43.2px; text-align: center; margin-bottom: 21px; }
.theme-row { display: flex; justify-content: flex-end; margin-bottom: 15px; }
.theme { height: 36px; width: 113px; border-radius: 18px; background: #1f2a39; padding: 2px 0 0; display: flex; align-items: center; justify-content: center; gap: 4px; }
.theme svg { width: 17px; height: 17px; }
.filters { display: flex; gap: 15px; height: 38px; margin-bottom: 13px; }
.filters input { flex: 1; background: transparent; border: 1px solid #fff; border-radius: 7px; padding: 0 7px 0 7.5px; }
.filters input::placeholder { color: #808590; }
.filters select { width: 153px; border-radius: 5px; background-color: #1f2a39; padding: 0 0 1px 6px; }
h2 { font-size: 32.4px; line-height: 38px; text-align: center; margin-bottom: 21px; }
.grid { display: grid; grid-template-columns: repeat(3, 355px); gap: 21.6px 22px; }
.card { min-height: 200px; border-radius: 6px; background: #1f2a39; padding: 18px; }
h3 { font-size: 21.6px; line-height: 28px; }
.card p { font-size: 12.6px; line-height: 18px; }
.rating { height: 22px; margin: 9px 0 16px; display: flex; align-items: center; gap: 8px; color: #99a1af; }
.stars { font-family: "DejaVu Sans", sans-serif; font-size: 16px; letter-spacing: .3px; width: 72px; padding-top: 2px; white-space: nowrap; color: #fdc700; }
.contact { display: block; width: 81px; height: 36px; padding: 0; border-radius: 5px; background: #2b7fff; }
.map { position: relative; height: 231px; border-radius: 6px; overflow: hidden; background: #ddd; box-shadow: 0 4px 6px #0002; }
.tiles { width: 319px; height: 231px; }
.zoom { position: absolute; left: 9px; top: 9px; width: 29px; border: 1px solid #aaa; border-radius: 4px; overflow: hidden; background: #fff; font: bold 20px/28px "Liberation Sans", sans-serif; color: #000; text-align: center; }
.zoom span { display: block; height: 27px; }
.zoom span + span { border-top: 1px solid #ccc; line-height: 26px; }
.zoom .off { background: #f4f4f4; color: #bbb; }
.credit { position: absolute; right: 0; bottom: 0; height: 15px; padding: 0 4px 0 5px; background: #fffc; display: flex; align-items: center; gap: 4px; font: 10.8px/15px "Liberation Sans", sans-serif; color: #0078a8; }
.credit i { width: 10px; height: 8px; background: linear-gradient(#4c7be1 50%, #ffd500 50%); }

.label { font: 26px "Noto Sans", sans-serif; fill: #333; stroke: #fff9; stroke-width: 5px; paint-order: stroke; }
.small { font-size: 24px; }
.grey, .zone { font-style: italic; fill: #777; }
.zone { fill: #8c6c9a; }
.water { fill: #4c80b6; }
.gov { fill: #4350b0; font-weight: 600; font-size: 25px; }
.park { fill: #37864b; font-style: italic; font-size: 29px; }
.district { fill: #777; font-size: 36px; }
.shield { font: 24px "Noto Sans", sans-serif; fill: #8e514b; }
.alt { font: 28px "Liberation Sans", sans-serif; fill: #fff; }

.scrollbar { width: 15px; background: #f1f1f1; display: flex; flex-direction: column; align-items: center; }
.up, .down { width: 0; height: 0; border: 4px solid transparent; }
.up { margin-top: 2px; border-bottom-color: #a0a0a0; }
.thumb { width: 11px; height: 216px; margin-top: 5px; background: #c1c1c1; }
.down { margin-top: auto; margin-bottom: 1px; border-top-color: #505050; }
```
